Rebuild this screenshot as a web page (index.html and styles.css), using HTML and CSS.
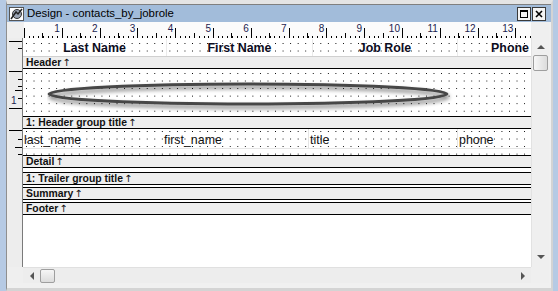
FILE: index.html
```html
<!DOCTYPE html>
<html>
<head>
    <meta charset='utf-8'>
    <title>Design - contacts_by_jobrole</title>
    <link rel="stylesheet" href="styles.css">
</head>
<body>
    <div class="window">
        <div class="titlebar">
            <span class="app-icon">
                <svg width="15" height="14" viewBox="0 0 15 14">
                    <rect x="0.5" y="0.5" width="14" height="13" fill="#fff" stroke="#555"/>
                    <circle cx="8" cy="7" r="4.5" fill="#9aa4b4" stroke="#333"/>
                    <path d="M2 12 L7 5 L9 7 L13 2" fill="none" stroke="#222" stroke-width="1.5"/>
                </svg>
            </span>
            <span class="title">Design - contacts_by_jobrole</span>
            <span class="win-btn">
                <svg width="12" height="12" viewBox="0 0 12 12"><rect x="2.5" y="2.5" width="7" height="7" fill="none" stroke="#000"/><rect x="2" y="2" width="8" height="2" fill="#000"/></svg>
            </span>
            <span class="win-btn">
                <svg width="12" height="12" viewBox="0 0 12 12"><path d="M3 3 L9 9 M9 3 L3 9" stroke="#000" stroke-width="1.6"/></svg>
            </span>
        </div>

        <div class="frame">
            <div class="corner"></div>
            <div class="ruler-top">
                <div class="ruler-nums">
                    <span>1</span><span>2</span><span>3</span><span>4</span><span>5</span><span>6</span><span>7</span>
                    <span>8</span><span>9</span><span>10</span><span>11</span><span>12</span><span>13</span>
                </div>
            </div>
            <div class="corner-r"></div>

            <div class="ruler-left">
                <div class="vr vr-header"></div>
                <div class="vr-gap"></div>
                <div class="vr vr-group"><span class="vr-num">1</span></div>
                <div class="vr-gap"></div>
                <div class="vr vr-detail"></div>
            </div>

            <div class="canvas">
                <div class="band band-header dots">
                    <div class="cell cell-1 bold">Last Name</div>
                    <div class="cell cell-2 bold">First Name</div>
                    <div class="cell cell-3 bold">Job Role</div>
                    <div class="cell cell-4 bold">Phone</div>
                </div>
                <div class="bar bar-first">Header<span class="up-arrow">&#8593;</span></div>

                <div class="band band-group dots">
                    <svg class="oval" width="410" height="34" viewBox="0 0 410 34">
                        <defs>
                            <filter id="sh" x="-5%" y="-50%" width="110%" height="220%">
                                <feGaussianBlur in="SourceAlpha" stdDeviation="2"/>
                                <feOffset dx="1" dy="3" result="b"/>
                                <feComponentTransfer><feFuncA type="linear" slope="0.55"/></feComponentTransfer>
                                <feMerge><feMergeNode/><feMergeNode in="SourceGraphic"/></feMerge>
                            </filter>
                        </defs>
                        <ellipse cx="201" cy="14" rx="199" ry="10" fill="none" stroke="#474747" stroke-width="3" filter="url(#sh)"/>
                    </svg>
                </div>
                <div class="bar">1: Header group title<span class="up-arrow">&#8593;</span></div>

                <div class="band band-detail dots">
                    <div class="fields">
                        <div class="field f-1">last_name</div>
                        <div class="field f-2">first_name</div>
                        <div class="field f-3">title</div>
                        <div class="field f-4">phone</div>
                    </div>
                </div>
                <div class="bar">Detail<span class="up-arrow">&#8593;</span></div>

                <div class="band band-trailer"></div>
                <div class="bar">1: Trailer group title<span class="up-arrow">&#8593;</span></div>

                <div class="band band-thin"></div>
                <div class="bar">Summary<span class="up-arrow">&#8593;</span></div>

                <div class="band band-thin"></div>
                <div class="bar">Footer<span class="up-arrow">&#8593;</span></div>

                <div class="blank"></div>
            </div>

            <div class="vscroll">
                <span class="arrow up"></span>
                <span class="thumb-v"></span>
                <span class="fill"></span>
                <span class="arrow down"></span>
            </div>

            <div class="corner"></div>
            <div class="hscroll">
                <span class="arrow left"></span>
                <span class="thumb-h"></span>
                <span class="fill"></span>
                <span class="arrow right"></span>
            </div>
            <div class="corner-r"></div>
        </div>
    </div>
</body>
</html>
```

FILE: styles.css
```css
html, body {
    margin: 0;
    padding: 0;
}
body {
    width: 558px;
    height: 291px;
    overflow: hidden;
    background: #b6cae4;
    font-family: "Liberation Sans", Arial, sans-serif;
    color: #000;
}
.window {
    margin-left: 6px;
    width: 544px;
    height: 284px;
    border-top: 4px solid #e4e4e4;
    border-left: 1px solid #8f8f8f;
    border-right: 2px solid #d4d4d4;
    border-bottom: 3px solid #d4d4d4;
    background: #f0f0f0;
    display: flex;
    flex-direction: column;
}

/* title bar */
.titlebar {
    height: 17px;
    flex: none;
    display: flex;
    align-items: center;
    background: #a2bcda;
    border-top: 1px solid #7f7f7f;
    padding-left: 2px;
    padding-right: 5px;
}
.app-icon {
    width: 16px;
    height: 15px;
    display: flex;
    align-items: center;
}
.title {
    flex-grow: 1;
    font-size: 11.4px;
    padding-left: 2px;
    line-height: 15px;
}
.win-btn {
    width: 14px;
    height: 14px;
    margin-left: 1px;
    background: #f4f4f4;
    border: 1px solid #3a3a3a;
    box-sizing: border-box;
    display: flex;
    align-items: center;
    justify-content: center;
}

/* frame grid */
.frame {
    flex-grow: 1;
    display: grid;
    grid-template-columns: 16px 508px 18px;
    grid-template-rows: 16px 229px 16px;
}
.corner, .corner-r {
    background: #efefef;
}

/* rulers */
.ruler-top {
    background:
        repeating-linear-gradient(to right, #000 0 1px, transparent 1px 37.8px) left bottom / 100% 10px no-repeat,
        repeating-linear-gradient(to right, transparent 0 18.4px, #000 18.4px 19.4px, transparent 19.4px 37.8px) left bottom / 100% 5px no-repeat,
        repeating-linear-gradient(to right, #000 0 1px, transparent 1px 4.725px) left bottom / 100% 2px no-repeat,
        #fbfbfb;
    margin-left: 1px;
}
.ruler-nums {
    display: flex;
    padding-top: 1px;
}
.ruler-nums span {
    flex: none;
    width: 37.8px;
    text-align: right;
    padding-right: 2px;
    box-sizing: border-box;
    font-size: 10px;
    line-height: 11px;
    color: #1d1d50;
}
.ruler-left {
    background: #ededed;
    border-right: 1px solid #7a7a7a;
    display: flex;
    flex-direction: column;
}
.vr {
    position: relative;
}
.vr-header {
    height: 18px;
    background:
        linear-gradient(#000, #000) right 0 top 3px / 13px 1px no-repeat,
        linear-gradient(#000, #000) right 0 top 10px / 4px 1px no-repeat;
}
.vr-gap { height: 13px; }
.vr-group {
    height: 47px;
    background:
        linear-gradient(#000, #000) right 0 top 2px / 13px 1px no-repeat,
        linear-gradient(#000, #000) right 0 top 10px / 4px 1px no-repeat,
        linear-gradient(#000, #000) right 0 top 17px / 4px 1px no-repeat,
        linear-gradient(#000, #000) right 0 top 21px / 7px 1px no-repeat,
        linear-gradient(#000, #000) right 0 top 29px / 4px 1px no-repeat,
        linear-gradient(#000, #000) right 0 top 39px / 13px 1px no-repeat;
}
.vr-num {
    position: absolute;
    left: 4px;
    top: 26px;
    font-size: 10px;
    color: #1d1d50;
}
.vr-detail {
    height: 26px;
    background:
        linear-gradient(#000, #000) right 0 top 1px / 13px 1px no-repeat,
        linear-gradient(#000, #000) right 0 top 10px / 4px 1px no-repeat,
        linear-gradient(#000, #000) right 0 top 18px / 7px 1px no-repeat,
        linear-gradient(#000, #000) right 0 top 25px / 4px 1px no-repeat;
}

/* canvas */
.canvas {
    background: #fff;
    display: flex;
    flex-direction: column;
    overflow: hidden;
}
.dots {
    background-color: #fff;
    background-image: conic-gradient(at 1px 1px, transparent 75%, #000 0);
    background-size: 7.56px 7.56px;
    background-position: 3px 4px;
}
.band {
    flex: none;
    position: relative;
}
.band-header {
    height: 18px;
    display: flex;
    border-top: 1px solid #fff;
    box-sizing: border-box;
}
.cell {
    flex: none;
    text-align: center;
    font-size: 12.4px;
    line-height: 19px;
    border-right: 1px solid #eaeaea;
    box-sizing: border-box;
}
.bold {
    font-weight: bold;
    color: #0c0c1e;
}
.cell-1 { width: 144px; }
.cell-2 { width: 146px; }
.cell-3 { width: 145px; }
.cell-4 { width: 104px; border-right: 0; }

.bar {
    flex: none;
    height: 13px;
    box-sizing: border-box;
    border-top: 1px solid #000;
    border-bottom: 1px solid #000;
    background: #eeeeee;
    font-size: 10.4px;
    font-weight: bold;
    line-height: 11px;
    padding-left: 3px;
    color: #111;
    white-space: nowrap;
}
.up-arrow {
    font-family: "DejaVu Sans", sans-serif;
    font-weight: normal;
    font-size: 10px;
    padding-left: 1px;
}
.bar-first {
    border-top: 1px solid #d0d0d0;
}
.band-group {
    height: 47px;
}
.oval {
    position: absolute;
    left: 24px;
    top: 11px;
}
.band-detail {
    height: 26px;
    background-position: 3px 2px;
}
.fields {
    display: flex;
    height: 19px;
    border-bottom: 1px solid #e6e6e6;
    background: #fff;
    background-image: inherit;
    background-size: inherit;
    background-position: inherit;
}
.field {
    flex: none;
    font-size: 12.4px;
    line-height: 22px;
    padding-left: 1px;
    box-sizing: border-box;
    color: #111;
}
.f-1 { width: 140px; }
.f-2 { width: 146px; border-right: 1px solid #e4e4e4; }
.f-3 { width: 149px; border-right: 1px solid #e4e4e4; }
.f-4 { width: 100px; }
.band-trailer {
    height: 4px;
    background: #fff;
}
.band-thin {
    height: 2px;
    background: #fff;
}
.blank {
    flex-grow: 1;
    background: #fff;
}

/* scrollbars */
.vscroll {
    background: #efefef;
    border-left: 1px solid #e2e2e2;
    display: flex;
    flex-direction: column;
    align-items: center;
}
.hscroll {
    background: #ededed;
    border-top: 1px solid #e0e0e0;
    display: flex;
    align-items: center;
}
.fill {
    flex-grow: 1;
}
.arrow {
    width: 0;
    height: 0;
    flex: none;
}
.up {
    margin-top: 7px;
    border-left: 4px solid transparent;
    border-right: 4px solid transparent;
    border-bottom: 4px solid #555;
}
.down {
    margin-bottom: 8px;
    border-left: 4px solid transparent;
    border-right: 4px solid transparent;
    border-top: 4px solid #555;
}
.left {
    margin-left: 7px;
    border-top: 4px solid transparent;
    border-bottom: 4px solid transparent;
    border-right: 4px solid #555;
}
.right {
    margin-right: 6px;
    border-top: 4px solid transparent;
    border-bottom: 4px solid transparent;
    border-left: 4px solid #555;
}
.thumb-v {
    width: 15px;
    height: 16px;
    margin-top: 6px;
    box-sizing: border-box;
    border: 1px solid #9e9e9e;
    border-radius: 2px;
    background: linear-gradient(to right, #f6f6f6, #dcdcdc);
}
.thumb-h {
    width: 15px;
    height: 14px;
    margin-left: 6px;
    box-sizing: border-box;
    border: 1px solid #9e9e9e;
    border-radius: 2px;
    background: linear-gradient(to bottom, #f6f6f6, #dcdcdc);
}
```
